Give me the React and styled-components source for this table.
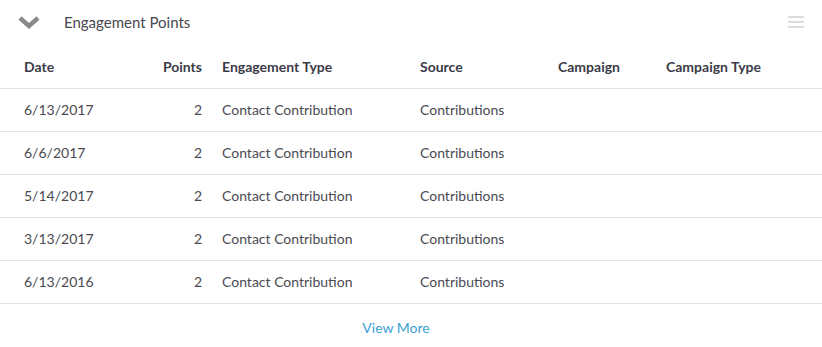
import styled, { createGlobalStyle } from "styled-components";

const GlobalStyle = createGlobalStyle`
  body {
    margin: 0;
    background: #fff;
    font-family: Lato, "Open Sans", sans-serif;
  }
`;

const Panel = styled.section`
  width: 822px;
  background: #fff;
`;

const PanelHeader = styled.div`
  display: flex;
  align-items: center;
  height: 44px;
  padding: 0 18px;
`;

const Toggle = styled.button`
  display: flex;
  align-items: center;
  justify-content: center;
  width: 22px;
  height: 22px;
  padding: 0;
  border: 0;
  background: none;
  cursor: pointer;
`;

const Title = styled.h2`
  margin: 0 0 0 24px;
  font-size: 15px;
  font-weight: 400;
  color: #474752;
  flex: 1;
`;

const Menu = styled.button`
  display: flex;
  flex-direction: column;
  gap: 3px;
  width: 16px;
  padding: 0;
  border: 0;
  background: none;
  cursor: pointer;

  span {
    display: block;
    height: 2px;
    background: #dcdcdc;
  }
`;

const Row = styled.div`
  display: grid;
  grid-template-columns: 108px 50px 178px 118px 88px 1fr;
  column-gap: 20px;
  align-items: center;
  height: ${({ $head }) => ($head ? "44px" : "41px")};
  padding: ${({ $head }) => ($head ? "0 24px" : "0 24px 1px")};
  border-bottom: 1px solid #e2e2e2;
  font-size: 14px;
  font-weight: ${({ $head }) => ($head ? 700 : 400)};
  color: ${({ $head }) => ($head ? "#3b3b47" : "#4a4a52")};
`;

const Cell = styled.div`
  text-align: ${({ $right }) => ($right ? "right" : "left")};
  white-space: nowrap;
`;

const Footer = styled.div`
  display: flex;
  justify-content: center;
  padding: 15px 30px 0 0;
`;

const ViewMore = styled.a`
  font-size: 14px;
  color: #3d9fd4;
  cursor: pointer;
`;

const columns = ["Date", "Points", "Engagement Type", "Source", "Campaign", "Campaign Type"];

const entries = [
  { date: "6/13/2017", points: 2 },
  { date: "6/6/2017", points: 2 },
  { date: "5/14/2017", points: 2 },
  { date: "3/13/2017", points: 2 },
  { date: "6/13/2016", points: 2 },
];

export default function App() {
  return (
    <>
      <GlobalStyle />
      <Panel>
        <PanelHeader>
          <Toggle aria-label="Collapse">
            <svg width="22" height="14" viewBox="0 0 22 14">
              <path d="M2 3 L11 11 L20 3" fill="none" stroke="#8a8a8a" strokeWidth="4.5" strokeLinejoin="miter" />
            </svg>
          </Toggle>
          <Title>Engagement Points</Title>
          <Menu aria-label="Menu">
            <span />
            <span />
            <span />
          </Menu>
        </PanelHeader>
        <Row $head>
          {columns.map((c) => (
            <Cell key={c} $right={c === "Points"}>
              {c}
            </Cell>
          ))}
        </Row>
        {entries.map((e) => (
          <Row key={e.date}>
            <Cell>{e.date}</Cell>
            <Cell $right>{e.points}</Cell>
            <Cell>Contact Contribution</Cell>
            <Cell>Contributions</Cell>
            <Cell />
            <Cell />
          </Row>
        ))}
        <Footer>
          <ViewMore>View More</ViewMore>
        </Footer>
      </Panel>
    </>
  );
}
